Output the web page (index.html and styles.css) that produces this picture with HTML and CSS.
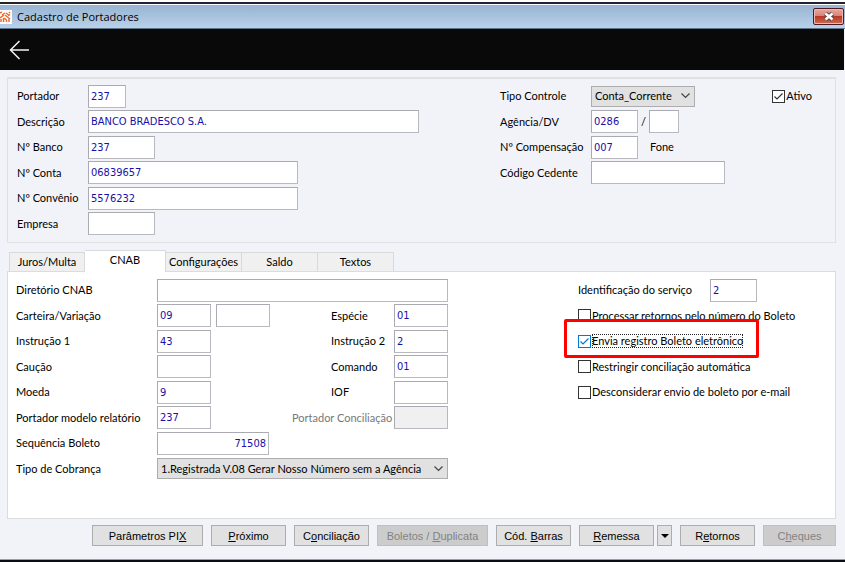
FILE: index.html
```
<!DOCTYPE html>
<html lang="pt-BR">
<head>
    <meta charset="UTF-8">
    <meta name="viewport" content="width=device-width, initial-scale=1.0">
    <title>Cadastro de Portadores</title>
    <link rel="stylesheet" href="styles.css">
</head>
<body>
    <div class="desktop-top"></div>

    <header class="titlebar">
        <svg class="app-icon" viewBox="0 0 12 14" aria-hidden="true">
            <rect width="12" height="14" fill="#fff"/>
            <path d="M0 3l2-1M2 5l3-2M6 3l2 1.500M9 2l1 1M0 8l4-3M5 5l5 4M1 12V9M3.500 12V8M4 8l2.500 2v2M9 12V9M8 5.500l2-1" stroke="#f26a2a" stroke-width="1.500" fill="none"/>
        </svg>
        <h1>Cadastro de Portadores</h1>
        <button type="button" class="close" aria-label="Fechar">
            <svg viewBox="0 0 14 11"><path d="M3.500 2.500l7 6M10.500 2.500l-7 6" stroke="#4a4a5a" stroke-width="4.500"/><path d="M3.500 2.500l7 6M10.500 2.500l-7 6" stroke="#fff" stroke-width="2.500"/></svg>
        </button>
    </header>

    <nav class="toolbar">
        <button type="button" class="back" aria-label="Voltar">
            <svg viewBox="0 0 20 20"><path d="M20 10H1.500M10.500 1L1.500 10l9 9" stroke="#f4f4f0" stroke-width="1.500" fill="none"/></svg>
        </button>
    </nav>

    <main class="form">
        <section class="card">
            <div class="column main-left">
                <div class="row"><label for="portador">Portador</label><input type="text" id="portador" class="w38" value="237"></div>
                <div class="row"><label for="descricao">Descrição</label><input type="text" id="descricao" class="w331" value="BANCO BRADESCO S.A."></div>
                <div class="row"><label for="banco">Nº Banco</label><input type="text" id="banco" class="w67" value="237"></div>
                <div class="row"><label for="conta">Nº Conta</label><input type="text" id="conta" class="w210" value="06839657"></div>
                <div class="row"><label for="convenio">Nº Convênio</label><input type="text" id="convenio" class="w210" value="5576232"></div>
                <div class="row"><label for="empresa">Empresa</label><input type="text" id="empresa" class="w67"></div>
            </div>
            <div class="column main-right">
                <div class="row">
                    <label for="tipoControle">Tipo Controle</label>
                    <select id="tipoControle" class="w104"><option>Conta_Corrente</option></select>
                    <label class="check ativo"><input type="checkbox" checked><span>Ativo</span></label>
                </div>
                <div class="row">
                    <label for="agencia">Agência/DV</label>
                    <input type="text" id="agencia" class="w47" value="0286">
                    <span class="slash">/</span>
                    <input type="text" class="w30" aria-label="DV">
                </div>
                <div class="row">
                    <label for="compensacao">Nº Compensação</label>
                    <input type="text" id="compensacao" class="w47" value="007">
                    <span class="fone">Fone</span>
                </div>
                <div class="row"><label for="cedente">Código Cedente</label><input type="text" id="cedente" class="w134"></div>
            </div>
        </section>

        <div class="tabs" role="tablist">
            <button type="button" role="tab">Juros/Multa</button>
            <button type="button" role="tab" class="active" aria-selected="true">CNAB</button>
            <button type="button" role="tab">Configurações</button>
            <button type="button" role="tab">Saldo</button>
            <button type="button" role="tab">Textos</button>
        </div>

        <section class="panel" role="tabpanel">
            <div class="column cnab">
                <div class="row"><label for="diretorio">Diretório CNAB</label><input type="text" id="diretorio" class="w291"></div>
                <div class="row">
                    <label for="carteira">Carteira/Variação</label>
                    <input type="text" id="carteira" class="w54" value="09">
                    <input type="text" class="w54 variacao" aria-label="Variação">
                    <span class="pair"><label for="especie">Espécie</label><input type="text" id="especie" class="w54" value="01"></span>
                </div>
                <div class="row">
                    <label for="instrucao1">Instrução 1</label>
                    <input type="text" id="instrucao1" class="w54" value="43">
                    <span class="pair"><label for="instrucao2">Instrução 2</label><input type="text" id="instrucao2" class="w54" value="2"></span>
                </div>
                <div class="row">
                    <label for="caucao">Caução</label>
                    <input type="text" id="caucao" class="w54">
                    <span class="pair"><label for="comando">Comando</label><input type="text" id="comando" class="w54" value="01"></span>
                </div>
                <div class="row">
                    <label for="moeda">Moeda</label>
                    <input type="text" id="moeda" class="w54" value="9">
                    <span class="pair"><label for="iof">IOF</label><input type="text" id="iof" class="w54"></span>
                </div>
                <div class="row">
                    <label for="modelo">Portador modelo relatório</label>
                    <input type="text" id="modelo" class="w54" value="237">
                    <span class="pair wide"><label for="conciliacao">Portador Conciliação</label><input type="text" id="conciliacao" class="w54" disabled></span>
                </div>
                <div class="row"><label for="sequencia">Sequência Boleto</label><input type="text" id="sequencia" class="w112 number" value="71508"></div>
                <div class="row">
                    <label for="cobranca">Tipo de Cobrança</label>
                    <select id="cobranca" class="w291"><option>1.Registrada V.08 Gerar Nosso Número sem a Agência</option></select>
                </div>
            </div>

            <div class="column servico">
                <div class="row"><label for="servico">Identificação do serviço</label><input type="text" id="servico" class="w47" value="2"></div>
                <div class="row"><label class="check"><input type="checkbox"><span>Processar retornos pelo número do Boleto</span></label></div>
                <div class="row"><label class="check focused"><input type="checkbox" checked><span>Envia registro Boleto eletrônico</span></label></div>
                <div class="row"><label class="check"><input type="checkbox"><span>Restringir conciliação automática</span></label></div>
                <div class="row"><label class="check"><input type="checkbox"><span>Desconsiderar envio de boleto por e-mail</span></label></div>
            </div>
        </section>

        <footer class="actions">
            <button type="button" class="w111">Parâmetros PI<u>X</u></button>
            <button type="button"><u>P</u>róximo</button>
            <button type="button">C<u>o</u>nciliação</button>
            <button type="button" class="w111" disabled>Boletos / <u>D</u>uplicata</button>
            <button type="button">Cód. <u>B</u>arras</button>
            <span class="split">
                <button type="button"><u>R</u>emessa</button>
                <button type="button" class="drop" aria-label="Opções de remessa"><svg viewBox="0 0 8 4"><path d="M0 0h8L4 4z"/></svg></button>
            </span>
            <button type="button">R<u>e</u>tornos</button>
            <button type="button" class="w73" disabled>C<u>h</u>eques</button>
        </footer>
    </main>

    <div class="desktop-bottom"></div>
</body>
</html>
```

FILE: styles.css
```
* {
    box-sizing: border-box;
}
body {
    margin: 0;
    min-height: 100vh;
    display: flex;
    flex-direction: column;
    background-color: #f2f3f9;
    color: #000;
    font: 11px/14px Lato, "Open Sans", sans-serif;
}
button, input, select {
    font: inherit;
    color: inherit;
    border-radius: 0;
    margin: 0;
}

/* title bar */
.desktop-top {
    height: 5px;
    background: linear-gradient(#fff 0 2px, #20232e 2px 4px, #fff 4px);
}
.titlebar {
    display: flex;
    align-items: center;
    height: 24px;
    padding-right: 1px;
    background: linear-gradient(#98b4d2, #b9d1ea);
    border-bottom: 1px solid #5c7388;
}
.app-icon {
    width: 12px;
    height: 14px;
}
h1 {
    flex: 1;
    margin: 0 0 0 5px;
    font: 11px/16px "Open Sans", sans-serif;
}
.close {
    width: 31px;
    height: 17px;
    padding: 0;
    display: flex;
    align-items: center;
    justify-content: center;
    border: 1px solid #4e1a24;
    border-radius: 2px;
    background: linear-gradient(#e9a99f, #d98477 45%, #b93a22 50%, #cf6a52);
    box-shadow: inset 0 0 0 1px #eeb8ae;
}
.close svg {
    flex: none;
    width: 14px;
    height: 11px;
}

/* black bar */
.toolbar {
    display: flex;
    align-items: center;
    height: 41px;
    margin-right: 1px;
    padding-left: 9px;
    background-color: #090909;
}
.back {
    padding: 0;
    border: 0;
    background: none;
}
.back svg {
    display: block;
    width: 20px;
    height: 20px;
}

/* form */
.form {
    flex: 1;
    padding: 7px 9px 0 7px;
}
.card {
    display: flex;
    padding: 4px 9px 6px;
    border: 1px solid #dfdfe4;
    border-top-width: 2px;
}
.column {
    display: flex;
    flex-direction: column;
}
.row {
    display: flex;
    align-items: center;
    min-height: 26px;
}
.card .row:nth-child(even), .panel .row:nth-child(even) {
    min-height: 25px;
}
.row label {
    flex: none;
    white-space: nowrap;
}
input[type="text"] {
    height: 23px;
    padding: 0 2px;
    border: 1px solid #a9aab2;
    border-right-color: #b9bac0;
    border-bottom-color: #b9bac0;
    background-color: #fff;
    color: #1a0fa8;
    font-family: "DejaVu Sans Condensed", sans-serif;
}
input[type="text"]:disabled {
    background-color: #f0f0f0;
}
input.number {
    text-align: right;
}
select {
    height: 21px;
    padding: 0 16px 0 3px;
    border: 1px solid #adadad;
    appearance: none;
    background: #e1e1e1 url("data:image/svg+xml,%3Csvg xmlns='http://www.w3.org/2000/svg' viewBox='0 0 9 6'%3E%3Cpath d='M.5 .5l4 4 4-4' fill='none' stroke='%23444' stroke-width='1.200'/%3E%3C/svg%3E") no-repeat right 4px center / 9px 6px;
}
.w30 { width: 30px; }
.w38 { width: 38px; }
.w47 { width: 47px; }
.w54 { width: 54px; }
.w67 { width: 67px; }
.w104 { width: 104px; }
.w112 { width: 112px; }
.w134 { width: 134px; }
.w210 { width: 210px; }
.w291 { width: 291px; }
.w331 { width: 331px; }

.main-left {
    width: 483px;
}
.main-left label {
    width: 71px;
}
.main-right {
    flex: 1;
}
.main-right .row > label:first-child {
    width: 91px;
}
.main-right .check {
    margin-left: auto;
    margin-right: 14px;
}
.slash {
    width: 11px;
    text-align: center;
}
.fone {
    margin-left: 12px;
}

/* check boxes */
.check {
    display: flex;
    align-items: center;
    gap: 1px;
}
.check input {
    appearance: none;
    width: 13px;
    height: 13px;
    border: 1px solid #333;
    background-color: #fff;
}
.check input:checked {
    background: #fff url("data:image/svg+xml,%3Csvg xmlns='http://www.w3.org/2000/svg' viewBox='0 0 11 11'%3E%3Cpath d='M1.500 5.500l2.500 2.500 5.500-5.500' fill='none' stroke='%23333' stroke-width='1.200'/%3E%3C/svg%3E") center / 11px 11px;
}
.focused input:checked {
    border-color: #0078d7;
    background-image: url("data:image/svg+xml,%3Csvg xmlns='http://www.w3.org/2000/svg' viewBox='0 0 11 11'%3E%3Cpath d='M1.500 5.500l2.500 2.500 5.500-5.500' fill='none' stroke='%230078d7' stroke-width='1.200'/%3E%3C/svg%3E");
}
.focused span {
    outline: 1px dotted #222;
    outline-offset: -1px;
}

/* tabs */
.tabs {
    display: flex;
    align-items: flex-end;
    height: 21px;
    margin-top: 7px;
    padding-left: 2px;
}
.tabs button {
    width: 76px;
    height: 19px;
    padding: 0;
    border: 1px solid #d9d9d9;
    border-width: 1px 1px 0 0;
    background-color: #f0f0f0;
    white-space: nowrap;
}
.tabs button:first-child {
    border-left-width: 1px;
}
.tabs .active {
    width: 81px;
    height: 22px;
    margin-bottom: -1px;
    padding-bottom: 3px;
    background-color: #fff;
    z-index: 1;
}
.panel {
    display: flex;
    min-height: 248px;
    padding: 5px 9px 0 8px;
    border: 1px solid #dcdcdc;
    background-color: #fff;
}
.cnab {
    width: 432px;
}
.cnab .row > label {
    width: 141px;
}
.variacao {
    margin-left: 5px;
}
.pair {
    display: flex;
    align-items: center;
    margin-left: auto;
}
.pair label {
    width: 63px;
}
.pair.wide label {
    width: 102px;
    color: #777;
}
.servico {
    margin-left: 130px;
}
.servico .row > label:first-child:not(.check) {
    width: 132px;
}

/* red frame round the option */
.focused {
    position: relative;
}
.focused::after {
    content: "";
    position: absolute;
    inset: -15px -16px -10px -14px;
    border: 3px solid #f00;
    border-radius: 2px;
    pointer-events: none;
}

/* bottom buttons */
.actions {
    display: flex;
    justify-content: flex-end;
    gap: 8px;
    padding-top: 6px;
    font-family: "Liberation Sans", Arial, sans-serif;
}
.actions button {
    width: 75px;
    height: 21px;
    padding: 0;
    border: 1px solid #adadad;
    background-color: #e1e1e1;
    white-space: nowrap;
}
.actions .w111 {
    width: 111px;
}
.actions .w73 {
    width: 73px;
}
.actions button:disabled {
    border-color: #bfbfbf;
    background-color: #ccc;
    color: #838383;
}
.split {
    display: flex;
    gap: 3px;
}
.actions .drop {
    width: 15px;
}
.drop svg {
    display: block;
    width: 8px;
    height: 4px;
    margin: 0 auto;
}
.desktop-bottom {
    height: 3px;
    border-top: 1px solid #35c4e4;
    background-color: #0b0d14;
}
```
